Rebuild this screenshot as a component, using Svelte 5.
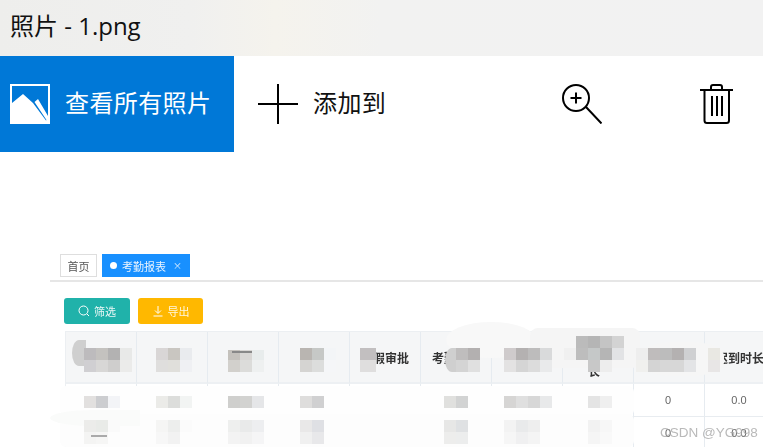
<script>
  // pixelated patches over the photographed table: [x, y, colour]
  const cell = 12;
  const mosaic = [
    [84,348,'#bdbbbd'],[96,348,'#c4c2bf'],[108,348,'#b3b2b2'],[120,348,'#e8e9e8'],
    [84,360,'#d0cfd2'],[96,360,'#d8d7d6'],[108,360,'#cfcecd'],[120,360,'#ebebea'],
    [156,348,'#d9d6d6'],[168,348,'#c9c6c1'],[180,348,'#e9ebee'],
    [156,360,'#dfdedd'],[168,360,'#e0dfdb'],[180,360,'#eff0f3'],
    [228,350,'#c4c1bc'],[240,350,'#d8d6d4'],[252,350,'#e8ecec'],
    [228,360,'#d2d0cc'],[240,360,'#dcdcda'],[252,360,'#eef0f0'],
    [300,348,'#b9b5b1'],[312,348,'#c6c8c6'],[324,348,'#f3f5f7'],
    [300,360,'#d5d4d2'],[312,360,'#dcdddc'],[324,360,'#f5f6f8'],
    [360,348,'#c2bfc0'],[364,348,'#c2bfc0'],[360,360,'#dfdede'],[364,360,'#dfdede'],
    [456,348,'#bfbdbd'],[468,348,'#b3b0b0'],[456,360,'#d4d4d4'],[468,360,'#e0e0e0'],
    [504,348,'#cfcbcc'],[516,348,'#b4b1b1'],[528,348,'#bdbcbc'],[540,348,'#d9dadb'],
    [504,360,'#e3e2e2'],[516,360,'#d5d5d5'],[528,360,'#dcdcdc'],[540,360,'#e9eaeb'],
    [576,336,'#bbbbbb'],[588,336,'#b5b5b5'],[600,336,'#c4c4c4'],[612,336,'#d3d3d3'],
    [564,348,'#f0f0f0'],[576,348,'#bdbdbd'],[588,348,'#c5c8c8'],[600,348,'#b5b5b5'],[612,348,'#e2e3e5'],
    [588,360,'#c8c8c8'],[600,360,'#ededed'],
    [636,348,'#eeeeee'],[648,348,'#bfbcbc'],[660,348,'#bcbcbc'],[672,348,'#b4b1b1'],[684,348,'#cfd0d2'],
    [636,360,'#f0f0ee'],[648,360,'#d4d4d4'],[660,360,'#d7d7d7'],[672,360,'#d7d7d7'],[684,360,'#e3e4e6'],
    [708,348,'#e9e8e3'],[708,360,'#e8e6e6'],
    [84,396,'#e2e0df'],[96,396,'#cccdd0'],[108,396,'#f3f4f7'],
    [156,396,'#ebebe8'],[168,396,'#dcdddb'],[180,396,'#f2f4f3'],
    [228,396,'#cfcfcd'],[240,396,'#d2d2d0'],[252,396,'#e5e6e8'],
    [300,396,'#dedddc'],[312,396,'#d0d0d1'],
    [444,396,'#e0e0de'],[456,396,'#d2d3d3'],
    [504,396,'#d6d5d4'],[516,396,'#dfdfdf'],[528,396,'#d7d7d7'],[540,396,'#e8e9ea'],
    [588,396,'#e4e4e4'],[600,396,'#efefef'],
    [84,420,'#ececea'],[96,420,'#e9ebe8'],[108,420,'#fafafa'],[84,432,'#f4f4f3'],[96,432,'#f6f6f5'],
    [156,420,'#f5f5f4'],[168,420,'#edeeed'],[180,420,'#fbfbfb'],[156,432,'#f7f7f7'],[168,432,'#f2f2f2'],
    [228,420,'#eeefee'],[240,420,'#e9eaea'],[252,420,'#edeef0'],[228,432,'#f3f3f3'],[240,432,'#f1f1f1'],[252,432,'#f5f5f6'],
    [300,420,'#e9e8e8'],[312,420,'#dfe0e4'],[300,432,'#f0f0f0'],[312,432,'#e8e8ea'],
    [444,420,'#e7e7e6'],[456,420,'#dfe1e3'],[444,432,'#ededec'],[456,432,'#eceded'],
    [504,420,'#f3f3f3'],[516,420,'#e9eaeb'],[528,420,'#eeeeee'],[504,432,'#f6f6f6'],[516,432,'#f0f0f1'],[528,432,'#f4f4f4'],
    [588,420,'#f2f2f2'],[600,420,'#f7f7f7'],[588,432,'#f5f5f5'],[600,432,'#f9f9f9']
  ];

  // soft smears that wipe the grid lines: [x, y, w, h, colour, radius]
  const smears = [
    [72,340,14,26,'#cfcfcf','50% 0 0 50%'],
    [60,386,574,30,'#fefefe','6px'],
    [60,414,574,33,'#fdfdfd','6px'],
    [50,410,90,16,'#fafbfa','50% 0 0 50%'],
    [446,322,90,36,'#f8f8f8','50%'],
    [445,348,14,24,'#cfcfcf','60% 0 0 60%'],
    [530,328,110,40,'#f5f5f5','8px'],
    [640,342,84,34,'#f6f6f6','40%']
  ];

  const headers = ['', '', '', '', '请假审批', '考勤时长', '', '', '', '迟到时长'];
</script>

<div class="app">
  <header class="title">照片 - 1.png</header>

  <nav class="toolbar">
    <button class="all">
      <svg width="40" height="40" viewBox="0 0 40 40">
        <rect width="40" height="40" fill="#fff" />
        <path fill="#0078d7" d="M2 2H38V32L28 15L24.5 18L36.5 36L36 36.5L23 19L13 10L2 19Z" />
      </svg>
      <span>查看所有照片</span>
    </button>
    <button class="add">
      <svg width="40" height="40" viewBox="0 0 40 40">
        <path d="M0 20H40M20 0V40" stroke="#000" stroke-width="2" fill="none" />
      </svg>
      <span>添加到</span>
    </button>
    <div class="tools">
      <svg width="40" height="40" viewBox="0 0 40 40" fill="none" stroke="#000" stroke-width="2">
        <circle cx="14" cy="14" r="13" />
        <path d="M24 23L39.5 39.5M8.5 14H19.5M14 8.5V19.5" />
      </svg>
      <svg width="40" height="40" viewBox="0 0 40 40" fill="none" stroke="#000" stroke-width="2">
        <path d="M2 6H35M13 6V3Q13 1 15 1H22Q24 1 24 3V6" />
        <path d="M6.5 6V36.5Q6.5 39 9 39H28.5Q31 39 31 36.5V6" />
        <path d="M14 12V32M19 12V32M24 12V32" />
      </svg>
    </div>
  </nav>

  <section class="shot">
    <div class="tabs">
      <span class="tab">首页</span>
      <span class="tab active"><i></i>考勤报表<small>×</small></span>
    </div>
    <div class="actions">
      <span class="btn teal">
        <svg width="12" height="12" viewBox="0 0 12 12" fill="none" stroke="#fff" stroke-width="1">
          <circle cx="5.5" cy="5.5" r="4.5" /><path d="M9 9L11 11" />
        </svg>
        筛选
      </span>
      <span class="btn amber">
        <svg width="12" height="12" viewBox="0 0 12 12" fill="none" stroke="#fff" stroke-width="1">
          <path d="M6 1V8M3 5.5L6 8.5L9 5.5M1.5 11H10.5" />
        </svg>
        导出
      </span>
    </div>
    <div class="table">
      {#each headers as h}
        <div class="th">{h}</div>
      {/each}
      {#each Array(8) as _}<div class="td"></div>{/each}
      <div class="td">0</div>
      <div class="td">0.0</div>
      {#each Array(8) as _}<div class="td"></div>{/each}
      <div class="td">0</div>
      <div class="td">0.0</div>
    </div>
    <!-- the blur makes .shot the containing block, so pull the layer back to page coordinates -->
    <div class="layer">
      {#each smears as [x, y, w, h, c, r]}
        <div class="patch" style="left:{x}px;top:{y}px;width:{w}px;height:{h}px;background:{c};border-radius:{r}"></div>
      {/each}
      <div class="glyph">长</div>
      {#each mosaic as [x, y, c]}
        <div class="patch" style="left:{x}px;top:{y}px;width:{cell}px;height:{cell}px;background:{c}"></div>
      {/each}
      <div class="patch" style="left:232px;top:351px;width:20px;height:2px;background:#888"></div>
      <div class="patch" style="left:91px;top:435px;width:16px;height:2px;background:#aaa"></div>
      <div class="mark">CSDN @YG998</div>
    </div>
  </section>
</div>

<style>
  :global(body) {
    background: #fff;
    overflow: hidden;
  }

  .app {
    width: 763px;
    height: 447px;
    overflow: hidden;
    font-family: "Noto Sans CJK SC", "Noto Sans", sans-serif;
    color: #000;
  }

  .title {
    height: 56px;
    line-height: 52px;
    padding-left: 10px;
    font-family: "Open Sans", "Noto Sans CJK SC", sans-serif;
    font-size: 24px;
    color: #111;
    background: linear-gradient(90deg, #eeeeec 0%, #f0f0ef 25%, #f5f3ed 36%, #f2f2f1 50%, #f2f2f2 100%);
  }

  .toolbar {
    display: flex;
    align-items: stretch;
    height: 96px;
    background: #fff;
  }

  button {
    display: flex;
    align-items: center;
    gap: 15px;
    margin: 0;
    border: 0;
    background: none;
    font: inherit;
    font-size: 24px;
    letter-spacing: 0.4px;
    color: #111;
  }

  button span {
    margin-top: -6px;
  }

  .all {
    width: 234px;
    padding: 0 0 0 10px;
    background: #0078d7;
    color: #fff;
  }

  .add {
    padding: 0 0 0 24px;
  }

  .tools {
    display: flex;
    align-items: center;
    gap: 96px;
    margin-left: auto;
    padding-right: 25px;
  }

  .shot {
    position: relative;
    padding-top: 102px;
    filter: blur(0.35px);
    color: #555;
  }

  .layer {
    position: absolute;
    left: 0;
    top: -152px;
  }

  .tabs {
    display: flex;
    gap: 5px;
    height: 26px;
    margin-left: 50px;
    padding-left: 10px;
    border-bottom: 2px solid #e6e6e6;
    font-size: 11px;
  }

  .tab {
    display: flex;
    align-items: center;
    justify-content: center;
    box-sizing: border-box;
    width: 37px;
    height: 23px;
    border: 1px solid #dedede;
    color: #555;
  }

  .tab.active {
    width: 88px;
    border: 0;
    background: #1890ff;
    color: #e8f3ff;
  }

  .tab i {
    width: 7px;
    height: 7px;
    margin-right: 5px;
    border-radius: 50%;
    background: #fff;
  }

  .tab small {
    margin-left: 7px;
    font-size: 9px;
  }

  .actions {
    display: flex;
    gap: 8px;
    margin: 16px 0 7px 64px;
  }

  .btn {
    display: flex;
    align-items: center;
    justify-content: center;
    gap: 4px;
    width: 65px;
    height: 26px;
    border-radius: 3px;
    font-size: 11px;
    color: #e9f7f5;
  }

  .teal {
    width: 66px;
    background: #20b2aa;
  }

  .amber {
    background: #ffb800;
    color: #fff6dc;
  }

  .table {
    display: grid;
    grid-template-columns: repeat(10, 71px);
    grid-template-rows: 52px 33px 33px;
    width: 711px;
    margin-left: 65px;
    border-top: 1px solid #eceff2;
    border-left: 1px solid #eceff2;
  }

  .th,
  .td {
    display: flex;
    align-items: center;
    justify-content: center;
    box-sizing: border-box;
    border-right: 1px solid #e6ebf0;
  }

  .th {
    background: #f5f6f7;
    border-bottom: 2px solid #edf0f3;
    font-size: 12px;
    font-weight: 700;
    color: #333;
  }

  .th:last-child {
    padding-right: 6px;
  }

  .td {
    padding-right: 2px;
    border-bottom: 1px solid #e8ecf0;
    font-family: "Liberation Sans", sans-serif;
    font-size: 11px;
    color: #666;
  }

  .patch {
    position: absolute;
  }

  .glyph {
    position: absolute;
    left: 588px;
    top: 362px;
    font-size: 12px;
    font-weight: 700;
    color: #333;
  }

  .mark {
    position: absolute;
    left: 660px;
    top: 425px;
    font-family: "Liberation Sans", sans-serif;
    font-size: 13.5px;
    white-space: nowrap;
    color: #a8a8a8;
    opacity: 0.8;
  }
</style>
